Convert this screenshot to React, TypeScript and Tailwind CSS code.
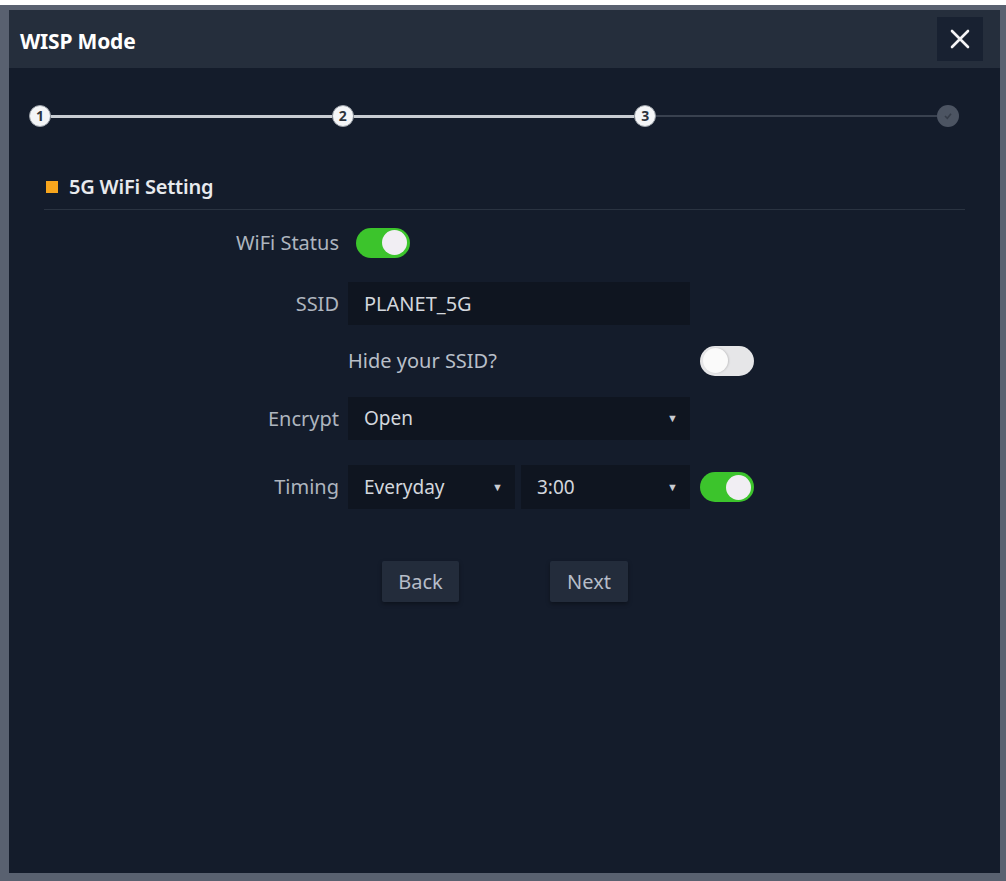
import React from "react";

function Toggle({ on }: { on: boolean }) {
  return on ? (
    <div className="w-[54px] h-[30px] rounded-full bg-[#3cc42c] flex items-center justify-end pr-[3px]">
      <div className="w-[25px] h-[25px] rounded-full bg-[#f1eef3]" />
    </div>
  ) : (
    <div className="w-[54px] h-[30px] rounded-full bg-[#e6e6e8] flex items-center justify-start pl-[3px]">
      <div className="w-[25px] h-[25px] rounded-full bg-[#fafafa] shadow-[1px_0_2px_rgba(0,0,0,0.15)]" />
    </div>
  );
}

function Step({ n }: { n: string }) {
  return (
    <div className="w-[22px] h-[22px] rounded-full bg-[#f4f5f7] border border-[#9aa0a8] flex items-center justify-center text-[14px] font-bold text-[#2d333c] leading-none shrink-0">
      {n}
    </div>
  );
}

function Caret() {
  return <span className="text-[11px] text-[#c8ccd2]">▼</span>;
}

export default function App() {
  const font = { fontFamily: '"Noto Sans", "Open Sans", sans-serif' };
  return (
    <div className="w-[1006px] h-[881px] bg-white pt-[5px] overflow-hidden" style={font}>
      <div className="h-[876px] bg-[#596170] pl-[9px] pr-[6px] pt-[5px] pb-[8px] flex">
        <div className="flex-1 bg-[#141c2b] flex flex-col">
          {/* Header */}
          <div className="h-[58px] bg-[#252e3c] flex items-center pl-[11px] pr-[17px]">
            <div className="text-[21px] font-bold text-white flex-1 tracking-[-0.2px] pt-[5px]">WISP Mode</div>
            <div className="w-[46px] h-[44px] bg-[#182131] flex items-center justify-center">
              <svg width="22" height="22" viewBox="0 0 22 22">
                <path d="M3 3 L19 19 M19 3 L3 19" stroke="#f4f4f6" strokeWidth="2.6" strokeLinecap="round" />
              </svg>
            </div>
          </div>

          {/* Stepper */}
          <div className="h-[96px] flex items-center pl-[20px] pr-[41px]">
            <Step n="1" />
            <div className="flex-1 h-[3px] bg-[#c8ccd2]" />
            <Step n="2" />
            <div className="flex-1 h-[3px] bg-[#c8ccd2]" />
            <Step n="3" />
            <div className="flex-1 h-[2px] bg-[#39414f]" />
            <div className="w-[22px] h-[22px] rounded-full bg-[#4c5462] flex items-center justify-center shrink-0">
              <svg width="10" height="10" viewBox="0 0 10 10">
                <path d="M2 5 L4.3 7.3 L8 2.8" stroke="#353c48" strokeWidth="1.6" fill="none" />
              </svg>
            </div>
          </div>

          {/* Section title */}
          <div className="mx-[35px] h-[46px] flex items-center border-b border-[#2a3341]">
            <div className="w-[12px] h-[12px] bg-[#f7a51d] ml-[2px] mr-[11px]" />
            <div className="text-[20px] font-semibold text-[#e8eaee] tracking-[-0.2px]">5G WiFi Setting</div>
          </div>

          {/* Form */}
          <div className="flex flex-col mt-[17px] text-[20px] text-[#aeb5bf]">
            <div className="flex items-center h-[31px]">
              <div className="w-[330px] text-right">WiFi Status</div>
              <div className="ml-[17px]"><Toggle on /></div>
            </div>
            <div className="flex items-center h-[43px] mt-[24px]">
              <div className="w-[330px] text-right">SSID</div>
              <div className="ml-[9px] w-[342px] h-[43px] bg-[#0f1520] flex items-center pl-[16px] text-[20px] text-[#d3d7dd]">PLANET_5G</div>
            </div>
            <div className="flex items-center h-[31px] mt-[20px]">
              <div className="w-[330px]" />
              <div className="ml-[9px] w-[352px] text-[#b9bfc8]">Hide your SSID?</div>
              <Toggle on={false} />
            </div>
            <div className="flex items-center h-[43px] mt-[21px]">
              <div className="w-[330px] text-right">Encrypt</div>
              <div className="ml-[9px] w-[342px] h-[43px] bg-[#0f1520] flex items-center justify-between pl-[16px] pr-[12px] text-[19px] text-[#d3d7dd]">
                <span>Open</span>
                <Caret />
              </div>
            </div>
            <div className="flex items-center h-[44px] mt-[25px]">
              <div className="w-[330px] text-right">Timing</div>
              <div className="ml-[9px] w-[167px] h-[44px] bg-[#0f1520] flex items-center justify-between pl-[16px] pr-[12px] text-[19px] text-[#d3d7dd]">
                <span>Everyday</span>
                <Caret />
              </div>
              <div className="ml-[6px] w-[169px] h-[44px] bg-[#0f1520] flex items-center justify-between pl-[16px] pr-[12px] text-[19px] text-[#d3d7dd]">
                <span>3:00</span>
                <Caret />
              </div>
              <div className="ml-[10px]"><Toggle on /></div>
            </div>
            <div className="flex items-center h-[41px] mt-[52px]">
              <div className="ml-[373px] w-[77px] h-[41px] bg-[#232c3b] rounded-[2px] shadow-[0_2px_4px_rgba(0,0,0,0.35)] flex items-center justify-center text-[#b6bdc8]">Back</div>
              <div className="ml-[91px] w-[78px] h-[41px] bg-[#232c3b] rounded-[2px] shadow-[0_2px_4px_rgba(0,0,0,0.35)] flex items-center justify-center text-[#b6bdc8]">Next</div>
            </div>
          </div>
        </div>
      </div>
    </div>
  );
}
